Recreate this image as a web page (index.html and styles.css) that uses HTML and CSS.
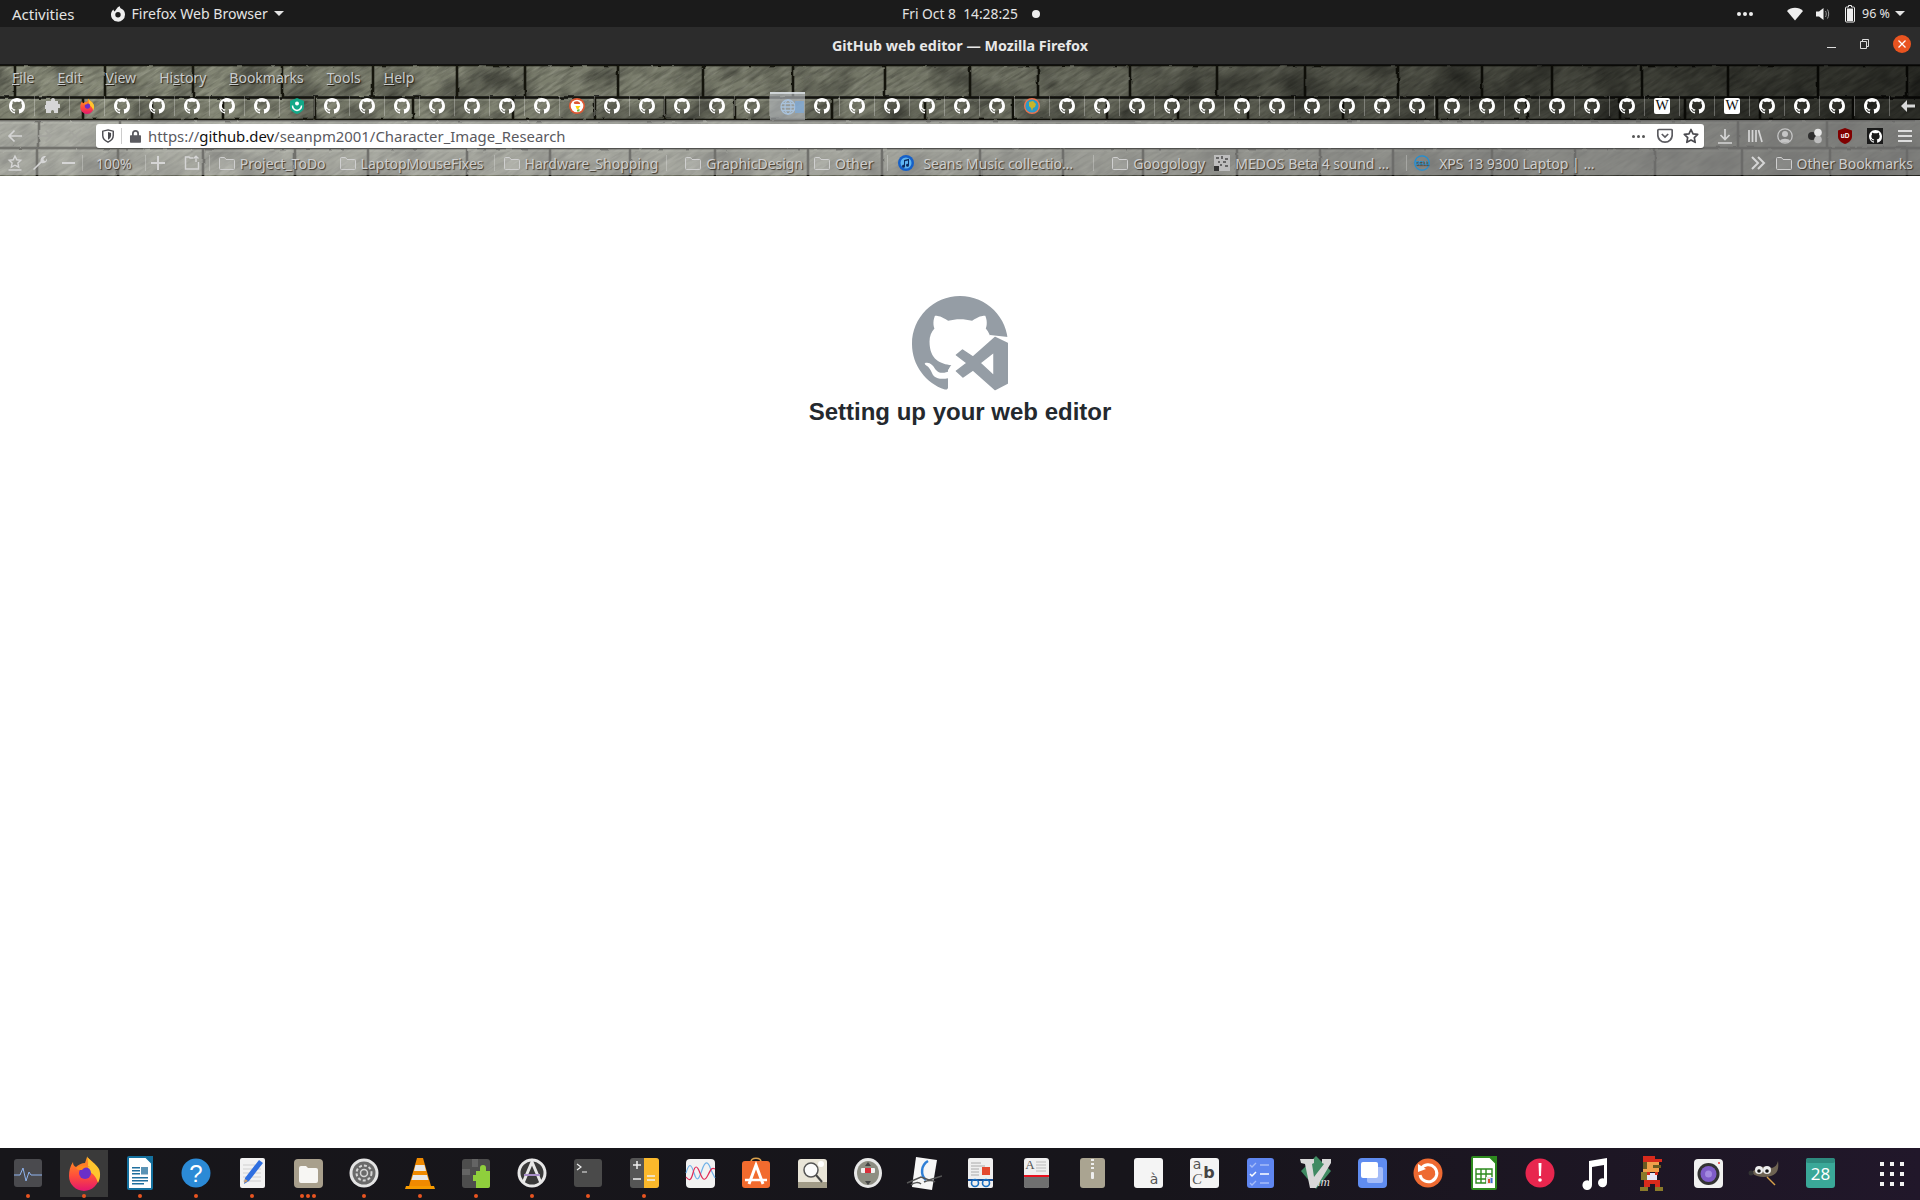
FILE: index.html
```html
<!DOCTYPE html>
<html lang="en">
<head>
    <meta charset="UTF-8">
    <title>GitHub web editor — Mozilla Firefox</title>
    <link rel="stylesheet" href="styles.css">
</head>
<body>
    <svg class="defs" width="0" height="0">
        <defs>
            <linearGradient id="ffGrad" x1="0" y1="0" x2="0" y2="1"><stop offset="0" stop-color="#ff9a1f"/><stop offset=".55" stop-color="#ff4f3a"/><stop offset="1" stop-color="#e3156f"/></linearGradient>
            <linearGradient id="shade" x1="0" y1="0" x2="1" y2="0"><stop offset="0" stop-color="#000" stop-opacity="0"/><stop offset=".45" stop-color="#000" stop-opacity=".12"/><stop offset=".75" stop-color="#000" stop-opacity=".45"/><stop offset="1" stop-color="#000" stop-opacity=".68"/></linearGradient>
            <filter id="streak" x="0" y="0" width="100%" height="100%"><feTurbulence type="fractalNoise" baseFrequency=".05 .3" numOctaves="3" seed="7"/><feColorMatrix values="0 0 0 0 0  0 0 0 0 0  0 0 0 0 0  2 0 0 0 -.85"/></filter>
            <filter id="glint" x="0" y="0" width="100%" height="100%"><feTurbulence type="fractalNoise" baseFrequency=".06 .35" numOctaves="3" seed="12"/><feColorMatrix values="0 0 0 0 1  0 0 0 0 1  0 0 0 0 .92  2 0 0 0 -.9"/></filter>
            <filter id="mottle" x="0" y="0" width="100%" height="100%"><feTurbulence type="fractalNoise" baseFrequency=".025" numOctaves="3" seed="21"/><feColorMatrix values="0 0 0 0 0  0 0 0 0 0  0 0 0 0 0  2.400 0 0 0 -1"/></filter>
            <filter id="rough" x="-2%" y="-10%" width="104%" height="120%"><feTurbulence type="fractalNoise" baseFrequency=".09" numOctaves="2" seed="3"/><feDisplacementMap in="SourceGraphic" scale="2.500"/></filter>
            <symbol id="gh" viewBox="0 0 16 16"><path fill="#fff" d="M8 0C3.58 0 0 3.58 0 8c0 3.54 2.29 6.53 5.47 7.59.4.07.55-.17.55-.38 0-.19-.01-.82-.01-1.49-2.01.37-2.53-.49-2.69-.94-.09-.23-.48-.94-.82-1.13-.28-.15-.68-.52-.01-.53.63-.01 1.08.58 1.23.82.72 1.21 1.87.87 2.33.66.07-.52.28-.87.51-1.07-1.78-.2-3.64-.89-3.64-3.95 0-.87.31-1.59.82-2.15-.08-.2-.36-1.02.08-2.12 0 0 .67-.21 2.2.82.64-.18 1.32-.27 2-.27.68 0 1.36.09 2 .27 1.53-1.04 2.2-.82 2.2-.82.44 1.1.16 1.92.08 2.12.51.56.82 1.27.82 2.15 0 3.07-1.87 3.75-3.65 3.95.29.25.54.73.54 1.48 0 1.07-.01 1.93-.01 2.2 0 .21.15.46.55.38A8.013 8.013 0 0016 8c0-4.42-3.58-8-8-8z"/></symbol>
            <symbol id="ff" viewBox="0 0 36 36"><path fill="url(#ffGrad)" d="M7 7c0 3 1 4 3 5 2-2 6-4 9-4l2-6c4 4 12 8 12 19a15 15 0 11-30 0c0-5 1-10 4-14z"/><path fill="#ffc52e" d="M21 1c2 5 9 7 12 13 2 5 1 10-1 14-2-7-6-11-11-12 1-5 2-10 0-15z"/><circle cx="19" cy="18" r="6" fill="#6a2fc8"/><path fill="#ff8a1f" d="M10 13c4-3 10-3 14-1-4 0-7 1-8 3-3 0-5 0-6-2z"/></symbol>
            <symbol id="folder" viewBox="0 0 16 16"><path fill="rgba(255,255,255,.12)" stroke="#cfcfcf" d="M.5 3.5a1 1 0 011-1h4l1.5 2h7.5a1 1 0 011 1v8a1 1 0 01-1 1h-13a1 1 0 01-1-1z"/></symbol>
        </defs>
    </svg>

    <header class="panel">
        <div class="panel-left">
            <span class="activities">Activities</span>
            <span class="app-menu">
                <svg class="app-icon" viewBox="0 0 16 16"><path fill="#eee" d="M8 1l2-.8C9.800 1.500 10.500 2.200 11.500 2.800 13.800 4 15 6 15 8.500A7 7 0 111.200 7c.4-1.500 1.200-2.800 2.300-3.600 0 1 .4 1.700 1.200 2.100C5.500 4 6.800 2.600 8 1z"/><circle cx="8" cy="8.800" r="2.700" fill="#1c1c1c"/></svg>
                Firefox Web Browser
                <i class="caret"></i>
            </span>
        </div>
        <div class="clock">Fri Oct 8 &nbsp;14:28:25<i class="clock-dot"></i></div>
        <div class="panel-right">
            <span class="more-dots"><i></i><i></i><i></i></span>
            <svg class="wifi" viewBox="0 0 16 14"><path fill="#eee" d="M0 4C2 2 5 .8 8 .8s6 1.200 8 3.200L8 13.500z"/></svg>
            <svg class="speaker" viewBox="0 0 16 16"><path fill="#eee" d="M1 5.500h3L8.500 2v12L4 10.500H1z"/><path fill="none" stroke="#999" d="M10.500 5c1 1.800 1 4.200 0 6M12.500 3.500c1.600 2.800 1.600 6.200 0 9"/></svg>
            <svg class="battery" viewBox="0 0 10 18"><path fill="none" stroke="#eee" d="M3.500.5h3v1.500h2a1 1 0 011 1v13a1 1 0 01-1 1h-7a1 1 0 01-1-1V3a1 1 0 011-1h2z"/><rect x="2" y="3.500" width="6" height="12.500" fill="#eee"/></svg>
            <span class="percent">96 %</span>
            <i class="caret"></i>
        </div>
    </header>

    <div class="titlebar">
        <span class="title">GitHub web editor — Mozilla Firefox</span>
        <div class="win-buttons">
            <i class="win-min"></i>
            <svg class="win-max" viewBox="0 0 9 10"><path fill="none" stroke="#ddd" d="M.5 2.500h6v7h-6zM2.500 2.500v-2h6v7h-2"/></svg>
            <i class="win-close">
                <svg viewBox="0 0 10 10"><path stroke="#fff" stroke-width="1.300" d="M1.500 1.500l7 7M8.500 1.500l-7 7"/></svg>
            </i>
        </div>
    </div>

    <div class="chrome">
        <!-- stone persona behind the toolbars -->
        <svg class="stone" width="1920" height="111" viewBox="0 0 1920 111">
            <rect width="1920" height="111" fill="#868977"/>
            <g transform="rotate(-32 960 55)">
                <rect x="-300" y="-900" width="2600" height="1900" filter="url(#streak)" opacity=".3"/>
                <rect x="-300" y="-900" width="2600" height="1900" filter="url(#glint)" opacity=".18"/>
            </g>
            <rect width="1920" height="111" filter="url(#mottle)" opacity=".4"/>
            <g filter="url(#rough)" fill="none">
                <path stroke="#d8dccb" stroke-opacity=".22" stroke-width="1.500" d="M0 35H1920M0 58H1920M0 86H1920"/>
                <path stroke="#12120e" stroke-width="2.500" d="M0 0H1920M0 32.500H1920M0 55H1920M0 83H1920"/>
                <path stroke="#12120e" stroke-width="2.500" d="M15 0V32M105 0V32M193 0V32M282 0V32M373 0V32M457 0V32M525 0V32M618 0V32M703 0V32M793 0V32M885 0V32M970 0V32M1038 0V32M1130 0V32M1217 0V32M1305 0V32M1398 0V32M1482 0V32M1552 0V32M1642 0V32M1728 0V32M1818 0V32M1907 0V32"/>
                <path stroke="#12120e" stroke-width="2.500" d="M83 33V55M152 33V55M223 33V55M315 33V55M413 33V55M513 33V55M595 33V55M665 33V55M735 33V55M832 33V55M925 33V55M1013 33V55M1107 33V55M1178 33V55M1248 33V55M1343 33V55M1437 33V55M1527 33V55M1620 33V55M1685 33V55M1760 33V55M1853 33V55"/>
                <path stroke="#12120e" stroke-width="2.500" d="M38 55V83M120 55V83M1738 55V83M1827 55V83"/>
                <path stroke="#12120e" stroke-width="2.500" d="M37 83V111M118 83V111M203 83V111M295 83V111M368 83V111M467 83V111M550 83V111M630 83V111M715 83V111M808 83V111M882 83V111M980 83V111M1063 83V111M1143 83V111M1237 83V111M1320 83V111M1393 83V111M1492 83V111M1575 83V111M1655 83V111M1742 83V111M1830 83V111M1907 83V111"/>
            </g>
            <rect width="1920" height="111" fill="url(#shade)"/>
        </svg>

        <nav class="menubar">
            <span><u>F</u>ile</span>
            <span><u>E</u>dit</span>
            <span><u>V</u>iew</span>
            <span>Hi<u>s</u>tory</span>
            <span><u>B</u>ookmarks</span>
            <span><u>T</u>ools</span>
            <span><u>H</u>elp</span>
        </nav>

        <div class="tabs">
            <div class="tab"><svg class="fav"><use href="#gh"/></svg></div>
            <div class="tab"><svg class="fav" viewBox="0 0 16 16"><path fill="#d6d6d6" d="M5 3h2V2a2 2 0 014 0v1h3v3h1a2 2 0 010 4h-1v5H10v-1.500a1.500 1.500 0 00-3 0V15H2v-4H1V7h1V3z"/></svg></div>
            <div class="tab"><svg class="fav"><use href="#ff"/></svg></div>
            <div class="tab"><svg class="fav"><use href="#gh"/></svg></div>
            <div class="tab"><svg class="fav"><use href="#gh"/></svg></div>
            <div class="tab"><svg class="fav"><use href="#gh"/></svg></div>
            <div class="tab"><svg class="fav"><use href="#gh"/></svg></div>
            <div class="tab"><svg class="fav"><use href="#gh"/></svg></div>
            <div class="tab"><svg class="fav" viewBox="0 0 16 16"><path fill="#13a888" d="M8 0l7 3v6c0 3-3 5.500-7 7-4-1.500-7-4-7-7V3z"/><circle cx="8" cy="5.500" r="2" fill="#fff"/><path fill="none" stroke="#fff" stroke-width="1.500" d="M3.500 7.500c0 3 2 4.500 4.500 5 2.500-.5 4.500-2 4.500-5"/></svg></div>
            <div class="tab"><svg class="fav"><use href="#gh"/></svg></div>
            <div class="tab"><svg class="fav"><use href="#gh"/></svg></div>
            <div class="tab"><svg class="fav"><use href="#gh"/></svg></div>
            <div class="tab"><svg class="fav"><use href="#gh"/></svg></div>
            <div class="tab"><svg class="fav"><use href="#gh"/></svg></div>
            <div class="tab"><svg class="fav"><use href="#gh"/></svg></div>
            <div class="tab"><svg class="fav"><use href="#gh"/></svg></div>
            <div class="tab"><svg class="fav" viewBox="0 0 16 16"><circle cx="8" cy="8" r="8" fill="#de5833"/><circle cx="8" cy="8" r="6.300" fill="#fff"/><path fill="#de5833" d="M5 4c2-1.500 5-1 6 1v1H6c-1 0-1.500-1-1-2z"/><path fill="#fdd20a" d="M6.500 8h5l-2 2.500 1 1H8z"/><path fill="#65bc46" d="M8 12l2.500-1v2.500H8z"/></svg></div>
            <div class="tab"><svg class="fav"><use href="#gh"/></svg></div>
            <div class="tab"><svg class="fav"><use href="#gh"/></svg></div>
            <div class="tab"><svg class="fav"><use href="#gh"/></svg></div>
            <div class="tab"><svg class="fav"><use href="#gh"/></svg></div>
            <div class="tab"><svg class="fav"><use href="#gh"/></svg></div>
            <div class="tab tab-active">
                <svg class="fav" viewBox="0 0 16 16"><g fill="none" stroke="#a9c2dc" stroke-width="1.300"><circle cx="8" cy="8" r="7"/><ellipse cx="8" cy="8" rx="3" ry="7"/><path d="M1 8h14M2.200 4.500h11.600M2.200 11.500h11.600"/></g></svg>
                <i class="tab-patch"></i>
            </div>
            <div class="tab"><svg class="fav"><use href="#gh"/></svg></div>
            <div class="tab"><svg class="fav"><use href="#gh"/></svg></div>
            <div class="tab"><svg class="fav"><use href="#gh"/></svg></div>
            <div class="tab"><svg class="fav"><use href="#gh"/></svg></div>
            <div class="tab"><svg class="fav"><use href="#gh"/></svg></div>
            <div class="tab"><svg class="fav"><use href="#gh"/></svg></div>
            <div class="tab"><svg class="fav" viewBox="0 0 16 16"><circle cx="8" cy="8" r="8" fill="#f0744f"/><circle cx="8" cy="8" r="6.600" fill="#2a9ac8"/><path fill="#c8b52a" d="M5 4l4-1 3 3-1 3-2 1-1 3-1-3-2-2z"/></svg></div>
            <div class="tab"><svg class="fav"><use href="#gh"/></svg></div>
            <div class="tab"><svg class="fav"><use href="#gh"/></svg></div>
            <div class="tab"><svg class="fav"><use href="#gh"/></svg></div>
            <div class="tab"><svg class="fav"><use href="#gh"/></svg></div>
            <div class="tab"><svg class="fav"><use href="#gh"/></svg></div>
            <div class="tab"><svg class="fav"><use href="#gh"/></svg></div>
            <div class="tab"><svg class="fav"><use href="#gh"/></svg></div>
            <div class="tab"><svg class="fav"><use href="#gh"/></svg></div>
            <div class="tab"><svg class="fav"><use href="#gh"/></svg></div>
            <div class="tab"><svg class="fav"><use href="#gh"/></svg></div>
            <div class="tab"><svg class="fav"><use href="#gh"/></svg></div>
            <div class="tab"><svg class="fav"><use href="#gh"/></svg></div>
            <div class="tab"><svg class="fav"><use href="#gh"/></svg></div>
            <div class="tab"><svg class="fav"><use href="#gh"/></svg></div>
            <div class="tab"><svg class="fav"><use href="#gh"/></svg></div>
            <div class="tab"><svg class="fav"><use href="#gh"/></svg></div>
            <div class="tab"><svg class="fav"><use href="#gh"/></svg></div>
            <div class="tab"><span class="wiki">W</span></div>
            <div class="tab"><svg class="fav"><use href="#gh"/></svg></div>
            <div class="tab"><span class="wiki">W</span></div>
            <div class="tab"><svg class="fav"><use href="#gh"/></svg></div>
            <div class="tab"><svg class="fav"><use href="#gh"/></svg></div>
            <div class="tab"><svg class="fav"><use href="#gh"/></svg></div>
            <div class="tab"><svg class="fav"><use href="#gh"/></svg></div>
            <div class="tab tab-last"><svg class="fav" viewBox="0 0 16 16"><path fill="#d8d8d8" d="M7 2v4.500h8v3H7V14L1 8z"/></svg></div>
        </div>

        <div class="lower">
            <div class="navbar">
                <div class="nav-btns">
                    <svg class="nav-btn" viewBox="0 0 16 16"><path fill="none" stroke="#d5d5d5" stroke-width="1.700" d="M15 8H2M7.500 2.500L2 8l5.500 5.500"/></svg>
                    <svg class="nav-btn" viewBox="0 0 16 16"><path fill="none" stroke="#a4a49e" stroke-width="1.500" d="M1 8h13M8.500 2.500L14 8l-5.500 5.500"/></svg>
                    <svg class="nav-btn" viewBox="0 0 16 16"><path fill="none" stroke="#a4a49e" stroke-width="1.500" d="M2 2l12 12M14 2L2 14"/></svg>
                </div>
                <div class="urlbar">
                    <svg class="shield" viewBox="0 0 16 16"><path fill="none" stroke="#4a4a4f" stroke-width="1.600" d="M8 1l6 1.500v5c0 3.500-2.500 6-6 7.500-3.500-1.500-6-4-6-7.500v-5z"/><path fill="#4a4a4f" d="M8 3.500l3.500 1v3c0 2.200-1.500 3.800-3.500 4.800z"/></svg>
                    <i class="url-sep"></i>
                    <svg class="lock" viewBox="0 0 14 16"><path fill="#5b5b60" d="M3 7V5a4 4 0 018 0v2h1.500a.8.8 0 01.8.8v7a.8.8 0 01-.8.8h-11a.8.8 0 01-.8-.8v-7a.8.8 0 01.8-.8zm2 0h4V5a2 2 0 00-4 0z"/></svg>
                    <span class="url">https://<b>github.dev</b>/seanpm2001/Character_Image_Research</span>
                    <span class="url-dots"><i></i><i></i><i></i></span>
                    <svg class="pocket" viewBox="0 0 16 16"><path fill="none" stroke="#5b5b60" stroke-width="1.700" d="M1.800 1.500h12.400a1 1 0 011 1V7a7.200 7.200 0 01-14.400 0V2.500a1 1 0 011-1zM4.800 6l3.200 3 3.200-3"/></svg>
                    <svg class="star" viewBox="0 0 16 16"><path fill="none" stroke="#4a4a4f" stroke-width="1.700" stroke-linejoin="round" d="M8 1.500l2 4.300 4.700.6-3.400 3.200.9 4.700L8 12l-4.200 2.300.9-4.700L1.300 6.400 6 5.800z"/></svg>
                </div>
                <div class="tools">
                    <svg class="tool" viewBox="0 0 16 16"><path fill="none" stroke="#d5d5d5" stroke-width="1.700" d="M8 1v10M3.500 7L8 11.500 12.500 7M1 15h14"/></svg>
                    <svg class="tool" viewBox="0 0 16 16"><path fill="none" stroke="#d5d5d5" stroke-width="1.700" d="M2 2v12M5.500 2v12M9 2v12M11.500 2l3.500 12"/></svg>
                    <svg class="tool" viewBox="0 0 16 16"><circle cx="8" cy="8" r="7.200" fill="none" stroke="#c5c5c5" stroke-width="1.300"/><circle cx="8" cy="6" r="3" fill="#c5c5c5"/><path fill="#c5c5c5" d="M3 13c1-3 9-3 10 0-2 2-8 2-10 0z"/></svg>
                    <svg class="tool" viewBox="0 0 16 16"><circle cx="5" cy="8" r="4" fill="#2e2e2e"/><circle cx="11" cy="4.500" r="3.800" fill="#e6e6e6"/><circle cx="11" cy="11.500" r="3.800" fill="#bdbdbd"/></svg>
                    <svg class="tool" viewBox="0 0 16 16"><path fill="#800000" d="M8 0l7 2.500v6c0 3.500-3 6-7 7.500-4-1.500-7-4-7-7.500v-6z"/><text x="8" y="9.500" class="ub-text">uD</text></svg>
                    <span class="gh-box"><svg class="gh-mark"><use href="#gh"/></svg></span>
                    <svg class="tool" viewBox="0 0 16 16"><path stroke="#dcdcdc" stroke-width="2" d="M1 3h14M1 8h14M1 13h14"/></svg>
                </div>
            </div>

            <div class="bookmarks">
                <svg class="bm-tool bm-star" viewBox="0 0 16 16"><path fill="none" stroke="#d5d5d5" stroke-width="1.400" d="M8 1l1.800 3.800 4 .5-2.900 2.800.8 4L8 10.200 4.300 12.100l.8-4-2.900-2.800 4-.5zM1.500 15h13"/></svg>
                <svg class="bm-tool bm-wrench" viewBox="0 0 16 16"><path fill="#d5d5d5" d="M2 15l-1-1 7.500-7.500C8 4 9.500 1.500 12 1c.8-.2 1.500 0 2 .2L11.500 4l.5 1.500 1.500.5L15 3.500c.5 2.500-1.500 5.500-5.500 4.500z"/></svg>
                <i class="bm-minus"></i>
                <i class="bm-sep sep-a"></i>
                <span class="zoom-level">100%</span>
                <i class="bm-sep sep-b"></i>
                <svg class="bm-tool bm-plus" viewBox="0 0 16 16"><path stroke="#d5d5d5" stroke-width="2" d="M8 1v14M1 8h14"/></svg>
                <svg class="bm-tool bm-up" viewBox="0 0 16 16"><path fill="none" stroke="#d5d5d5" stroke-width="1.400" d="M9 3H6L5 2H1.500v12h13V7M12 7V1.500M9.500 3.500L12 1.200l2.500 2.300"/></svg>
                <i class="bm-sep sep-c"></i>
                <a class="bm bm-project"><svg class="bm-icon"><use href="#folder"/></svg>Project_ToDo</a>
                <a class="bm bm-laptop"><svg class="bm-icon"><use href="#folder"/></svg>LaptopMouseFixes</a>
                <i class="bm-sep sep-d"></i>
                <a class="bm bm-hardware"><svg class="bm-icon"><use href="#folder"/></svg>Hardware_Shopping</a>
                <i class="bm-sep sep-e"></i>
                <a class="bm bm-graphic"><svg class="bm-icon"><use href="#folder"/></svg>GraphicDesign</a>
                <a class="bm bm-other"><svg class="bm-icon"><use href="#folder"/></svg>Other</a>
                <i class="bm-sep sep-f"></i>
                <a class="bm bm-music"><svg class="bm-icon" viewBox="0 0 16 16"><circle cx="8" cy="8" r="8" fill="#1560c8"/><circle cx="8" cy="8" r="5.500" fill="#5fb4f0"/><path fill="#0c2a60" d="M6 5l5-1.200v6.500a1.500 1.500 0 11-1-1.400V5.500L7 6.200v5a1.500 1.500 0 11-1-1.400z"/></svg>Seans Music collectio…</a>
                <i class="bm-sep sep-g"></i>
                <a class="bm bm-goog"><svg class="bm-icon"><use href="#folder"/></svg>Googology</a>
                <a class="bm bm-medos"><svg class="bm-icon" viewBox="0 0 16 16"><rect width="16" height="16" fill="#bdbdbd"/><path fill="#666" d="M2 2h3v2H2zM7 1h2v3H7zM11 3h3v2h-3zM4 6h2v2H4zM9 6h3v2H9zM6 9h2v2H6zM11 10h3v2h-3z"/><rect y="11" width="5" height="5" fill="#333"/></svg>MEDOS Beta 4 sound …</a>
                <i class="bm-sep sep-h"></i>
                <a class="bm bm-xps"><svg class="bm-icon" viewBox="0 0 16 16"><circle cx="8" cy="8" r="7.200" fill="none" stroke="#1f8fd6" stroke-width="1.300"/><text x="8" y="10" class="dell-text">DELL</text></svg>XPS 13 9300 Laptop | …</a>
                <svg class="bm-tool bm-chev" viewBox="0 0 16 16"><path fill="none" stroke="#d5d5d5" stroke-width="2" d="M2 2l6 6-6 6M8 2l6 6-6 6"/></svg>
                <a class="bm bm-more"><svg class="bm-icon"><use href="#folder"/></svg>Other Bookmarks</a>
            </div>
        </div>
    </div>

    <main class="page">
        <svg class="logo" viewBox="0 0 96 96">
            <path fill="#959da5" d="M48 0C21.480 0 0 21.480 0 48c0 21.240 13.740 39.180 32.820 45.540 2.400.42 3.300-1.020 3.300-2.280 0-1.140-.06-4.920-.06-8.940-12.060 2.220-15.180-2.940-16.140-5.640-.54-1.380-2.880-5.640-4.920-6.780-1.680-.9-4.080-3.120-.06-3.180 3.780-.06 6.480 3.480 7.380 4.920 4.320 7.260 11.220 5.220 13.980 3.960.42-3.120 1.680-5.220 3.060-6.420-10.680-1.200-21.840-5.340-21.840-23.700 0-5.220 1.860-9.540 4.920-12.900-.48-1.200-2.160-6.120.48-12.720 0 0 4.020-1.260 13.200 4.920 3.840-1.080 7.920-1.620 12-1.620 4.080 0 8.160.54 12 1.620 9.180-6.240 13.200-4.920 13.200-4.920 2.640 6.600.96 11.520.48 12.720 3.060 3.360 4.920 7.620 4.920 12.900 0 18.420-11.220 22.500-21.900 23.700 1.740 1.500 3.240 4.380 3.240 8.880 0 6.420-.06 11.580-.06 13.200 0 1.260.9 2.760 3.300 2.280A48.078 48.078 0 0096 48C96 21.480 74.520 0 48 0z"/>
            <path fill="#fff" d="M36 97V74l16-18 26-17 19 2v56z"/>
            <path fill="#959da5" fill-rule="evenodd" stroke="#959da5" stroke-width="1.500" stroke-linejoin="round" d="M83 41.500l12.500 6v39.500L83 93.500 61 74l-10 7-6.500-6L55 67 44.500 59l6-5 10.500 7zM82 56L68 67l14 13z"/>
        </svg>
        <h1 class="heading">Setting up your web editor</h1>
    </main>

    <footer class="dock">
        <div class="slot"><svg class="dock-icon" viewBox="0 0 36 36"><rect x="4" y="4" width="28" height="28" rx="3" fill="#4a4a4e"/><path fill="none" stroke="#8fb3ee" stroke-width="1" d="M4 20h6l3-7 3 13 3-9 2 3h11"/></svg><span class="dots"><i></i></span></div>
        <div class="slot slot-active"><svg class="dock-icon"><use href="#ff"/></svg><span class="dots"><i></i></span></div>
        <div class="slot"><svg class="dock-icon" viewBox="0 0 36 36"><path fill="#fff" stroke="#14709e" stroke-width="2" d="M7 2h17l6 6v25a1 1 0 01-1 1H7a1 1 0 01-1-1V3a1 1 0 011-1z"/><path fill="#14709e" d="M24 1h7v7z"/><path fill="#1f6f9e" d="M10 12h8v1.500h-8zM10 15h8v1.500h-8zM10 18h8v1.500h-8zM10 22h16v1.500H10zM10 25h16v1.500H10zM10 28h12v1.500H10z"/><rect x="19" y="12" width="7" height="7.500" fill="#5a93b5"/></svg><span class="dots"><i></i></span></div>
        <div class="slot"><svg class="dock-icon" viewBox="0 0 36 36"><circle cx="18" cy="18" r="14.500" fill="#2b8ad6"/><text x="18" y="27" class="help-text">?</text></svg><span class="dots"><i></i></span></div>
        <div class="slot"><svg class="dock-icon" viewBox="0 0 36 36"><rect x="6" y="3" width="25" height="30" rx="2" fill="#f2f2f2"/><path stroke="#d0d0d0" d="M9 10h18M9 14h18M9 18h18M9 22h18M9 26h18"/><path fill="#2f6fe0" d="M25 5l4 3-14 18-5 3 1-6z"/><path fill="#d8a060" d="M10 28l1-4 3 2z"/></svg><span class="dots"><i></i></span></div>
        <div class="slot"><svg class="dock-icon" viewBox="0 0 36 36"><rect x="4" y="4" width="29" height="29" rx="4" fill="#a89f8c"/><path fill="#f7f6f3" d="M9 13a2 2 0 012-2h5l2 2h8a2 2 0 012 2v11a2 2 0 01-2 2H11a2 2 0 01-2-2z"/></svg><span class="dots"><i></i><i></i><i></i></span></div>
        <div class="slot"><svg class="dock-icon" viewBox="0 0 36 36"><circle cx="18" cy="18" r="14.500" fill="#e4e4e4"/><circle cx="18" cy="18" r="11.500" fill="#6a6a6a"/><circle cx="18" cy="18" r="7.500" fill="none" stroke="#d5d5d5" stroke-width="2" stroke-dasharray="3 2"/><circle cx="18" cy="18" r="3.500" fill="none" stroke="#d5d5d5" stroke-width="1.500"/></svg><span class="dots"><i></i></span></div>
        <div class="slot"><svg class="dock-icon" viewBox="0 0 36 36"><path fill="#f08a00" d="M15 3h6l8 28h-22z"/><path fill="#e8e8e8" d="M13.500 10h9l1.500 6H12zM11 20h14l1.500 5h-17z"/><path fill="#f59a00" d="M4 31h28l1 3H3z"/></svg><span class="dots"><i></i></span></div>
        <div class="slot"><svg class="dock-icon" viewBox="0 0 36 36"><rect x="4" y="4" width="28" height="29" rx="3" fill="#4d4d4d"/><path fill="#646464" d="M14 4h6v8h-6zM4 14h8v6H4z"/><path fill="#8fcf3c" d="M32 16h-4v-3a3 3 0 00-6 0v3h-4v4h-3v6h3v7h12a2 2 0 002-2z"/></svg><span class="dots"><i></i></span></div>
        <div class="slot"><svg class="dock-icon" viewBox="0 0 36 36"><circle cx="18" cy="18" r="13" fill="#3a3a3a" stroke="#e8e8e8" stroke-width="3"/><path fill="none" stroke="#e8e8e8" stroke-width="3" d="M9 28L18 7l9 21"/><path stroke="#a88fc8" stroke-width="2" d="M10 20h16"/></svg><span class="dots"><i></i></span></div>
        <div class="slot"><svg class="dock-icon" viewBox="0 0 36 36"><rect x="4" y="4" width="28" height="28" rx="3" fill="#4a4a4a"/><path fill="none" stroke="#eee" stroke-width="1.200" d="M7 9l4 3-4 3M12 17h5"/></svg><span class="dots"><i></i></span></div>
        <div class="slot"><svg class="dock-icon" viewBox="0 0 36 36"><rect x="4" y="3" width="29" height="30" rx="3" fill="#555"/><path fill="#fbb82b" d="M18 3h12a3 3 0 013 3v24a3 3 0 01-3 3H18z"/><path stroke="#eee" stroke-width="1.500" d="M7 10h8M11 6v8M7 24h8M21 21h8M21 25h8"/></svg><span class="dots"><i></i></span></div>
        <div class="slot"><svg class="dock-icon" viewBox="0 0 36 36"><rect x="4" y="4" width="29" height="29" rx="4" fill="#f2f2f2"/><path fill="none" stroke="#6fb1e8" stroke-width="1.200" d="M4 18c3-10 5-10 8 0s5 6 8-3 6-10 9 0l4 8"/><path fill="none" stroke="#e02a56" stroke-width="1.200" d="M4 22c3 4 5 4 7-4s4-8 7 0 5 8 8 2 4-8 7-6"/></svg></div>
        <div class="slot"><svg class="dock-icon" viewBox="0 0 36 36"><path fill="none" stroke="#dca24c" stroke-width="1.500" d="M13 7c0-5 10-5 10 0"/><rect x="4" y="6" width="28" height="27" rx="3" fill="#f26b2e"/><path fill="none" stroke="#fff" stroke-width="3" d="M11 29L18 10l7 19"/><path stroke="#fff" stroke-width="2.500" d="M7 25h22"/></svg></div>
        <div class="slot"><svg class="dock-icon" viewBox="0 0 36 36"><rect x="4" y="4" width="29" height="29" rx="3" fill="#e9e5d8"/><rect x="4" y="27" width="29" height="6" fill="#a29c88"/><circle cx="17" cy="15" r="7" fill="#fbfbfb" stroke="#555" stroke-width="1.500"/><path stroke="#444" stroke-width="2" d="M22 20l6 7"/><circle cx="27" cy="9" r="3" fill="#fff"/></svg></div>
        <div class="slot"><svg class="dock-icon" viewBox="0 0 36 36"><ellipse cx="18" cy="18" rx="14" ry="15" fill="#e8e8e8"/><ellipse cx="18" cy="18" rx="11" ry="12" fill="#8d8d82"/><rect x="11" y="13" width="14" height="5" rx="1" fill="#f0f0f0"/><rect x="15" y="13" width="6" height="5" fill="#d92f3a"/><path fill="#444" d="M18 7l3 4h-6zM18 30l-3-4h6z"/></svg></div>
        <div class="slot"><svg class="dock-icon" viewBox="0 0 36 36"><path fill="#f6f6f6" d="M10 2l21 3-5 30-20-3z"/><path fill="none" stroke="#2f7fd6" stroke-width="2.500" d="M22 6c-7 4-8 14-2 19"/><path fill="none" stroke="#555" stroke-width="1.500" d="M1 28l14-6 8 3 13-4M5 30c3-3 8-3 10-1M18 27c4-2 9-2 11 0"/></svg></div>
        <div class="slot"><svg class="dock-icon" viewBox="0 0 36 36"><rect x="6" y="3" width="25" height="30" rx="2" fill="#efefef"/><path stroke="#aaa" d="M9 8h10M9 11h14M9 14h8M9 17h8M9 20h8"/><rect x="20" y="12" width="8" height="8" fill="#e4492f"/><path stroke="#1a4f96" stroke-width="2" d="M6 25h25"/><circle cx="13" cy="28" r="3.500" fill="none" stroke="#1a6fc0" stroke-width="1.600"/><circle cx="24" cy="28" r="3.500" fill="none" stroke="#1a6fc0" stroke-width="1.600"/></svg></div>
        <div class="slot"><svg class="dock-icon" viewBox="0 0 36 36"><rect x="6" y="3" width="25" height="30" rx="3" fill="#efefef"/><rect x="6" y="21" width="25" height="12" rx="2" fill="#707070"/><text x="12" y="14" class="font-a">A</text><path stroke="#bbb" d="M18 7h10M18 10h10M18 13h10M18 16h10"/><rect x="6" y="20" width="25" height="2" fill="#e8101e"/></svg></div>
        <div class="slot"><svg class="dock-icon" viewBox="0 0 36 36"><rect x="6" y="3" width="25" height="30" rx="3" fill="#aaa491"/><path stroke="#eee" stroke-width="3" stroke-dasharray="2 2" d="M18.500 4v12"/><rect x="17" y="17" width="3" height="7" rx="1" fill="#eee"/></svg></div>
        <div class="slot"><svg class="dock-icon" viewBox="0 0 36 36"><rect x="4" y="3" width="29" height="30" rx="3" fill="#f4f4f4"/><text x="24" y="29" class="glyph-a">à</text></svg></div>
        <div class="slot"><svg class="dock-icon" viewBox="0 0 36 36"><rect x="4" y="3" width="29" height="30" rx="3" fill="#f4f4f4"/><text x="11" y="14" class="glyph-a">a</text><text x="11" y="29" class="glyph-c">C</text><text x="23" y="23" class="glyph-b">b</text></svg></div>
        <div class="slot"><svg class="dock-icon" viewBox="0 0 36 36"><rect x="5" y="3" width="27" height="30" rx="3" fill="#5f86f0"/><path fill="none" stroke="#a6bcf8" stroke-width="1.300" d="M8 10l2 2 4-4M18 10h9M8 28l2 2 4-4M18 28h9"/><path fill="none" stroke="#fff" stroke-width="1.500" d="M8 19l2 2 4-4M18 19h9"/></svg></div>
        <div class="slot"><svg class="dock-icon" viewBox="0 0 36 36"><path fill="#3f8a62" d="M18 1l15 15-15 18L3 16z"/><path fill="#d8d8d8" d="M2 4h14v4l-2 1 2 13L26 9l-2-1V4h9v4L18 33h-6L7 9 3 8z"/><text x="19" y="31" class="vim-text">im</text></svg></div>
        <div class="slot"><svg class="dock-icon" viewBox="0 0 36 36"><rect x="4" y="3" width="29" height="30" rx="4" fill="#5f8cf0"/><rect x="13" y="12" width="16" height="16" rx="2" fill="#a4bcf8"/><rect x="7" y="7" width="17" height="16" rx="2" fill="#fff"/></svg></div>
        <div class="slot"><svg class="dock-icon" viewBox="0 0 36 36"><circle cx="18" cy="18" r="14.500" fill="#ee6a32"/><path fill="none" stroke="#fff" stroke-width="3" d="M11 14a8.500 8.500 0 11-1 6"/><path fill="#fff" d="M8 9l8 5-8 3z"/></svg></div>
        <div class="slot"><svg class="dock-icon" viewBox="0 0 36 36"><path fill="#fff" stroke="#2e8b1f" stroke-width="2" d="M7 2h17l6 6v25a1 1 0 01-1 1H7a1 1 0 01-1-1V3a1 1 0 011-1z"/><path fill="#2e8b1f" d="M24 1h7v7z"/><path fill="none" stroke="#2e8b1f" stroke-width="1.400" d="M10 14h16v14H10zM10 19h16M10 24h16M15 14v14M20 14v14"/><rect x="20" y="22" width="7" height="7" fill="#e8e8e8"/><rect x="22" y="24" width="2" height="4" fill="#d84f2f"/><rect x="24.500" y="23" width="2" height="5" fill="#3a6fd0"/></svg></div>
        <div class="slot"><svg class="dock-icon" viewBox="0 0 36 36"><circle cx="18" cy="18" r="14.500" fill="#e8264e"/><path fill="#fff" d="M16.500 8h3l-.5 13h-2z"/><circle cx="18" cy="25" r="1.800" fill="#fff"/></svg></div>
        <div class="slot"><svg class="dock-icon" viewBox="0 0 36 36"><path fill="#fff" d="M11 6l18-3v24.500a4.500 4.500 0 11-3-4V10l-12 2v18a4.800 4.800 0 11-3-4.300z"/></svg></div>
        <div class="slot"><svg class="dock-icon" viewBox="0 0 36 36"><path fill="#d92a1c" d="M9 1h12v3h7v3H9z"/><path fill="#f0a04b" d="M9 7h16v10H9z"/><path fill="#6b5a20" d="M9 7h4v7H9zM19 10h8v3h-8z"/><path fill="#8a7a2a" d="M7 17h6v8H7z"/><rect x="13" y="18" width="10" height="7" fill="#e8e8f8"/><path fill="#d92a1c" d="M10 25h16v7h-5v-3h-5v3h-6zM13 17h3v3h-3zM21 17h3v3h-3z"/><path fill="#8a7a2a" d="M6 32h8v4H6zM21 32h8v4h-8z"/></svg></div>
        <div class="slot"><svg class="dock-icon" viewBox="0 0 36 36"><rect x="4" y="4" width="29" height="29" rx="4" fill="#f1f1f1"/><circle cx="18.500" cy="19" r="11" fill="#333"/><circle cx="18.500" cy="19" r="8" fill="#7f5cc8"/><circle cx="18.500" cy="19" r="3.500" fill="#a48ae0"/><circle cx="29" cy="8" r="1" fill="#e33"/></svg></div>
        <div class="slot"><svg class="dock-icon" viewBox="0 0 36 36"><path fill="#6e6352" d="M6 18c4-7 14-7 20-5 3-1 5-3 6-7 1 7 0 13-7 15-7 2-15 1-19-3z"/><circle cx="13" cy="15" r="4" fill="#eee"/><circle cx="21" cy="15" r="4" fill="#eee"/><circle cx="13" cy="16" r="1.800" fill="#111"/><circle cx="21" cy="16" r="1.800" fill="#111"/><circle cx="5" cy="18" r="2.500" fill="#333"/><path stroke="#d8a24a" stroke-width="1.500" d="M21 22l8 8"/></svg></div>
        <div class="slot"><svg class="dock-icon" viewBox="0 0 36 36"><rect x="4" y="3" width="29" height="30" rx="3" fill="#3aa898"/><rect x="4" y="3" width="29" height="5" rx="2" fill="#2e8a7e"/><text x="18.500" y="25" class="cal-text">28</text></svg></div>
        <div class="grid-btn"><i></i><i></i><i></i><i></i><i></i><i></i><i></i><i></i><i></i></div>
    </footer>
</body>
</html>
```

FILE: styles.css
```css
* {
    box-sizing: border-box;
}

html, body {
    margin: 0;
    height: 100%;
}

body {
    display: flex;
    flex-direction: column;
    height: 1200px;
    overflow: hidden;
    background: #fff;
    font-family: "Noto Sans", sans-serif;
    font-size: 14px;
}

.defs {
    position: absolute;
}

i {
    display: block;
}

/* gnome panel */
.panel {
    display: grid;
    grid-template-columns: 1fr auto 1fr;
    align-items: center;
    height: 27px;
    background: #1b1b1b;
    color: #e4e4e4;
    font-size: 13.800px;
}

.panel-left {
    display: flex;
    align-items: center;
    padding-left: 12px;
}

.activities {
    margin-right: 35px;
    font-size: 15px;
}

.app-menu {
    display: flex;
    align-items: center;
    gap: 6px;
    font-size: 14.100px;
}

.app-icon {
    width: 16px;
    height: 16px;
}

.caret {
    width: 0;
    height: 0;
    border-left: 5px solid transparent;
    border-right: 5px solid transparent;
    border-top: 5px solid #e4e4e4;
}

.clock {
    position: relative;
}

.clock-dot {
    position: absolute;
    left: 130px;
    top: 6px;
    width: 8px;
    height: 8px;
    border-radius: 50%;
    background: #eee;
}

.panel-right {
    display: flex;
    align-items: center;
    justify-content: flex-end;
    padding-right: 15px;
}

.more-dots, .url-dots {
    display: flex;
    gap: 2px;
}

.more-dots i {
    width: 4px;
    height: 4px;
    border-radius: 50%;
    background: #eee;
}

.wifi {
    width: 16px;
    height: 14px;
    margin-left: 34px;
}

.speaker {
    width: 16px;
    height: 16px;
    margin-left: 12px;
}

.battery {
    width: 10px;
    height: 18px;
    margin-left: 14px;
}

.percent {
    margin: 0 5px 0 7px;
    font-size: 12.500px;
}

/* window title */
.titlebar {
    display: flex;
    align-items: center;
    justify-content: center;
    position: relative;
    height: 38px;
    background: #2c2c2c;
    border-bottom: 1px solid #111;
    color: #e8e8e8;
    font-weight: 700;
    font-size: 14.300px;
}

.win-buttons {
    position: absolute;
    right: 9px;
    top: 8px;
    display: flex;
    align-items: center;
    gap: 24px;
}

.win-min {
    width: 9px;
    height: 1px;
    margin-top: 7px;
    background: #ddd;
}

.win-max {
    width: 9px;
    height: 10px;
}

.win-close {
    width: 18px;
    height: 18px;
    padding: 4px;
    border-radius: 50%;
    background: #e95420;
}

.win-close svg {
    display: block;
}

/* browser toolbars on the stone theme */
.chrome {
    position: relative;
    height: 111px;
    border-bottom: 1px solid #1c1c1c;
}

.stone {
    position: absolute;
    left: 0;
    top: 0;
}

.menubar {
    position: relative;
    display: flex;
    align-items: center;
    gap: 23px;
    height: 31px;
    padding: 0 0 6px 12px;
    color: #c8ccce;
    text-shadow: 1px 1px 1px #2a2418;
}

.tabs {
    position: relative;
    display: flex;
    align-items: flex-start;
    height: 24px;
}

.tab {
    display: flex;
    align-items: center;
    justify-content: center;
    flex: none;
    width: 35px;
    height: 20px;
    border-right: 1px solid rgba(255, 255, 255, .28);
}

.tab-active {
    position: relative;
    height: 28px;
    margin-top: -4px;
    border-right: 0;
    border-top: 2px solid rgba(230, 235, 240, .7);
    background: rgba(190, 196, 200, .62);
}

.tab-patch {
    position: absolute;
    right: 1px;
    top: 7px;
    width: 9px;
    height: 12px;
    background: rgba(120, 170, 225, .65);
}

.tab-last {
    border-right: 0;
}

.fav {
    width: 16px;
    height: 16px;
}

.wiki {
    width: 16px;
    height: 16px;
    border-radius: 2px;
    background: #fff;
    color: #111;
    font-family: "Liberation Serif", serif;
    font-size: 14px;
    line-height: 16px;
    text-align: center;
}

.lower {
    position: relative;
    height: 55px;
    background: rgba(205, 205, 205, .5);
}

.navbar {
    display: flex;
    align-items: center;
    height: 31px;
    padding-top: 1px;
}

.nav-btns {
    display: flex;
    gap: 14px;
    flex: none;
    width: 96px;
    padding-left: 7px;
}

.nav-btn {
    width: 16px;
    height: 16px;
}

.urlbar {
    display: flex;
    align-items: center;
    flex: none;
    width: 1608px;
    height: 24px;
    padding: 0 5px 0 5px;
    border-radius: 3px;
    background: #fff;
    box-shadow: 0 1px 1px rgba(0, 0, 0, .3);
    color: #555;
}

.shield {
    width: 14px;
    height: 14px;
}

.url-sep {
    width: 1px;
    height: 16px;
    margin: 0 7px 0 6px;
    background: #ccc;
}

.lock {
    width: 13px;
    height: 14px;
}

.url {
    flex: 1;
    margin-left: 6px;
    color: #5a5a5f;
    font-size: 14.900px;
}

.url b {
    color: #111;
    font-weight: 400;
}

.url-dots {
    margin-right: 12px;
}

.url-dots i {
    width: 3px;
    height: 3px;
    border-radius: 50%;
    background: #555;
}

.pocket, .star {
    width: 16px;
    height: 16px;
}

.star {
    margin-left: 10px;
}

.tools {
    display: flex;
    align-items: center;
    gap: 14px;
    padding-left: 13px;
}

.tool {
    flex: none;
    width: 16px;
    height: 16px;
}

.ub-text {
    fill: #fff;
    font-family: "Liberation Sans", sans-serif;
    font-size: 6.500px;
    font-weight: 700;
    text-anchor: middle;
}

.gh-box {
    display: flex;
    align-items: center;
    justify-content: center;
    flex: none;
    width: 16px;
    height: 16px;
    background: #1a1a1a;
}

.gh-mark {
    width: 13px;
    height: 13px;
}

.bookmarks {
    display: flex;
    align-items: center;
    height: 24px;
    color: #cfcfcf;
    text-shadow: 1px 1px 1px #3a3226;
    white-space: nowrap;
}

.bm {
    display: flex;
    align-items: center;
    gap: 5px;
    flex: none;
}

.bm-icon {
    flex: none;
    width: 16px;
    height: 16px;
}

.dell-text {
    fill: #1f8fd6;
    font-family: "Liberation Sans", sans-serif;
    font-size: 5px;
    font-weight: 700;
    text-anchor: middle;
}

.bm-tool {
    flex: none;
    width: 16px;
    height: 16px;
}

.bm-star {
    margin-left: 7px;
}

.bm-wrench {
    margin-left: 9px;
}

.bm-minus {
    width: 13px;
    height: 2px;
    margin-left: 14px;
    background: #d5d5d5;
}

.bm-sep {
    flex: none;
    width: 1px;
    height: 16px;
    background: rgba(255, 255, 255, .25);
}

.sep-a { margin-left: 7px; }
.sep-b { margin-left: 13px; }
.sep-c { margin-left: 9px; }
.sep-d { margin-left: 10px; }
.sep-e { margin-left: 8px; }
.sep-f { margin-left: 14px; }
.sep-g { margin-left: 20px; }
.sep-h { margin-left: 17px; }

.zoom-level {
    margin-left: 13px;
}

.bm-plus { margin-left: 4px; }
.bm-up { margin-left: 18px; }

.bm-project { margin-left: 9px; }
.bm-laptop { margin-left: 14px; }
.bm-hardware { margin-left: 9px; }
.bm-graphic { margin-left: 18px; }
.bm-other { margin-left: 11px; }
.bm-music { margin-left: 10px; gap: 9px; }
.bm-goog { margin-left: 18px; }
.bm-medos { margin-left: 9px; }
.bm-xps { margin-left: 7px; gap: 9px; }
.bm-chev { margin-left: auto; }
.bm-more { margin: 0 7px 0 10px; }

/* loading screen */
.page {
    flex: 1;
    display: flex;
    flex-direction: column;
    align-items: center;
    padding-top: 120px;
    background: #fff;
}

.logo {
    width: 96px;
    height: 96px;
}

.heading {
    margin: 4px 0 0;
    color: #24292e;
    font-family: "Liberation Sans", sans-serif;
    font-size: 24px;
    font-weight: 700;
    line-height: 32px;
}

/* ubuntu dock */
.dock {
    display: flex;
    height: 52px;
    background: linear-gradient(90deg, #17161a, #17151b 60%, #21172a);
}

.slot {
    display: flex;
    flex-direction: column;
    align-items: center;
    flex: none;
    width: 56px;
    height: 52px;
    padding-top: 7px;
}

.slot-active {
    background: linear-gradient(#3a3a3a, #3a3a3a) no-repeat 4px 2px / 48px 47px;
}

.dock-icon {
    flex: none;
    width: 36px;
    height: 36px;
}

.dots {
    display: flex;
    gap: 2px;
    margin-top: 3px;
}

.dots i {
    width: 4px;
    height: 4px;
    border-radius: 50%;
    background: #e95420;
}

.help-text {
    fill: #fff;
    font-family: "Liberation Sans", sans-serif;
    font-size: 24px;
    text-anchor: middle;
}

.font-a {
    fill: #555;
    font-family: "Liberation Serif", serif;
    font-size: 13px;
    text-anchor: middle;
}

.glyph-a {
    fill: #555;
    font-family: "DejaVu Sans", sans-serif;
    font-size: 14px;
    text-anchor: middle;
}

.glyph-c {
    fill: #555;
    font-family: "Liberation Serif", serif;
    font-style: italic;
    font-size: 15px;
    text-anchor: middle;
}

.glyph-b {
    fill: #444;
    font-family: "DejaVu Sans", sans-serif;
    font-size: 16px;
    font-weight: 700;
    text-anchor: middle;
}

.vim-text {
    fill: #ddd;
    font-family: "Liberation Serif", serif;
    font-style: italic;
    font-size: 13px;
}

.cal-text {
    fill: #fff;
    font-family: "Noto Sans", sans-serif;
    font-size: 17px;
    text-anchor: middle;
}

.grid-btn {
    display: grid;
    grid-template-columns: repeat(3, 4px);
    gap: 6px;
    align-content: center;
    margin-left: 32px;
}

.grid-btn i {
    width: 4px;
    height: 4px;
    background: #f2f2f2;
}
```
